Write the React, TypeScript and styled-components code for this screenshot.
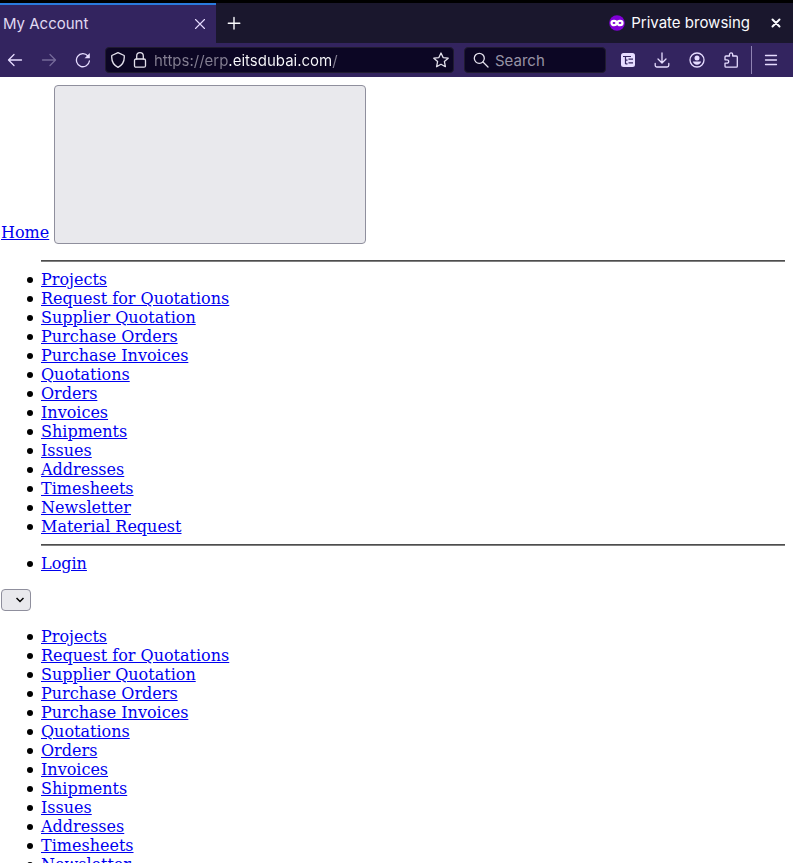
import React from 'react';
import styled, { createGlobalStyle } from 'styled-components';

const GlobalStyle = createGlobalStyle`
  * { box-sizing: border-box; }
  body { margin: 0; background: #fff; }
  button, input { font-family: Inter, sans-serif; }
`;

const Window = styled.div`
  display: flex;
  flex-direction: column;
  height: 100vh;
  overflow: hidden;
  border-top: 3px solid #000;
`;

const TabBar = styled.header`
  display: flex;
  align-items: stretch;
  flex: none;
  height: 40px;
  background: #1a172d;
  color: #fbfbfe;
  font: 15px/20px Inter, sans-serif;
`;

const Tab = styled.div`
  display: flex;
  align-items: center;
  justify-content: space-between;
  width: 216px;
  padding: 0 8px 0 3px;
  background: #33245f;
  border-top: 2px solid #2a7bde;
  color: #e0d9f2;
`;

const IconButton = styled.button<{ $width?: number; $color?: string }>`
  display: flex;
  flex: none;
  align-items: center;
  justify-content: center;
  width: ${(p) => p.$width ?? 16}px;
  padding: 0;
  border: 0;
  background: none;
  color: ${(p) => p.$color ?? '#e6dcff'};
`;

const PrivateBadge = styled.div`
  display: flex;
  align-items: center;
  gap: 6px;
  margin: 0 9px 0 auto;
  padding-bottom: 1px;
`;

const Toolbar = styled.nav`
  display: flex;
  flex: none;
  align-items: center;
  height: 34px;
  padding-right: 3px;
  background: #33245f;
`;

const Field = styled.div`
  display: flex;
  align-items: center;
  height: 26px;
  border: 1px solid #201c30;
  border-radius: 4px;
  background: #0c0624;
  color: #e4e1ed;
`;

const AddressField = styled(Field)`
  flex: 1;
  gap: 6px;
  margin-left: 6px;
  padding: 0 4px;
`;

const SearchField = styled(Field)`
  flex: none;
  gap: 6px;
  width: 142px;
  margin: 0 10px;
  padding: 0 8px;
`;

const TextInput = styled.input`
  flex: 1;
  min-width: 0;
  height: 24px;
  padding: 0;
  border: 0;
  outline: 0;
  background: transparent;
  color: #fbfbfe;
  font-size: 15px;
  &::placeholder { color: #9793a5; opacity: 1; }
`;

const AddressInput = styled(TextInput)`
  background: linear-gradient(90deg, #858093 75px, #fbfbfe 75px, #fbfbfe 178px, #858093 178px);
  background-clip: text;
  -webkit-background-clip: text;
  -webkit-text-fill-color: transparent;
`;

const Divider = styled.span`
  width: 1px;
  height: 28px;
  background: #8f83b2;
`;

const Page = styled.main`
  flex: 1;
  min-height: 0;
  overflow: hidden;
  padding: 8px 8px 0 1px;
  font: 16px/19px "DejaVu Serif", serif;
  color: #000;
`;

const HomeRow = styled.div`
  display: flex;
  align-items: flex-end;
  gap: 5px;
`;

const Link = styled.a`
  color: #0000ee;
  text-decoration: underline;
`;

const HomeLink = styled(Link)`
  padding-bottom: 2px;
`;

const MenuButton = styled.button`
  width: 312px;
  height: 159px;
  border: 1px solid #8f8f9d;
  border-radius: 4px;
  background: #e9e9ed;
`;

const List = styled.ul`
  margin: 16px 0;
  padding-left: 40px;
  list-style: none;
`;

const Item = styled.li`
  height: 19px;
  &::before {
    content: "";
    display: inline-block;
    width: 6px;
    height: 6px;
    margin: 0 8px 0 -14px;
    border-radius: 50%;
    background: #000;
    vertical-align: 2px;
  }
`;

const Rule = styled.hr`
  height: 2px;
  margin: 8px 0;
  border: solid;
  border-width: 1px 0;
  border-color: #4d4d4d #808080 #808080 #4d4d4d;
`;

const SelectWrap = styled.div`
  display: grid;
  align-items: center;
  width: 30px;
  > * { grid-area: 1 / 1; }
  svg { justify-self: end; margin-right: 7px; pointer-events: none; }
`;

const Select = styled.select`
  appearance: none;
  width: 100%;
  height: 22px;
  border: 1px solid #8f8f9d;
  border-radius: 4px;
  background: #e9e9ed;
`;

const Icon = ({ size = 16, stroke = 1.3, children }: { size?: number; stroke?: number; children: React.ReactNode }) => (
  <svg width={size} height={size} viewBox="0 0 16 16" fill="none" stroke="currentColor"
    strokeWidth={stroke} strokeLinecap="round" strokeLinejoin="round" aria-hidden="true">
    {children}
  </svg>
);

const MaskIcon = () => (
  <svg width="16" height="16" viewBox="0 0 16 16" aria-hidden="true">
    <circle cx="8" cy="8" r="7.8" fill="#8000d7" />
    <g fill="none" stroke="#fff" strokeWidth="2.2">
      <ellipse cx="5" cy="8" rx="2.500" ry="2.200" />
      <ellipse cx="11" cy="8" rx="2.500" ry="2.200" />
    </g>
  </svg>
);

const accountLinks = [
  'Projects', 'Request for Quotations', 'Supplier Quotation', 'Purchase Orders',
  'Purchase Invoices', 'Quotations', 'Orders', 'Invoices', 'Shipments', 'Issues',
  'Addresses', 'Timesheets', 'Newsletter', 'Material Request',
];

const AccountItems = () => (
  <>
    {accountLinks.map((label) => (
      <Item key={label}><Link href="#">{label}</Link></Item>
    ))}
  </>
);

export default function App() {
  return (
    <Window>
      <GlobalStyle />
      <TabBar>
        <Tab>
          <span>My Account</span>
          <IconButton aria-label="Close tab"><Icon stroke={1.1}><path d="M3.500 3.500l9 9M12.500 3.500l-9 9" /></Icon></IconButton>
        </Tab>
        <IconButton aria-label="New tab" $width={35} $color="#fbfbfe"><Icon stroke={1.4}><path d="M8 2.500v11.500M2.300 8.200h11.500" /></Icon></IconButton>
        <PrivateBadge><MaskIcon /><span>Private browsing</span></PrivateBadge>
        <IconButton aria-label="Close window" $width={34} $color="#fbfbfe"><Icon stroke={2}><path d="M4.500 4.500l7 7M11.500 4.500l-7 7" /></Icon></IconButton>
      </TabBar>
      <Toolbar>
        <IconButton aria-label="Back" $width={30}><Icon><path d="M14.500 8H1.800M7 2.500L1.500 8 7 13.500" /></Icon></IconButton>
        <IconButton aria-label="Forward" $width={37} $color="#756a99"><Icon><path d="M1.500 8h12.700M9 2.500L14.500 8 9 13.500" /></Icon></IconButton>
        <IconButton aria-label="Reload" $width={32}><Icon><path d="M14.400 9a6.500 6.500 0 1 1-1.500-5" /><path d="M14.800 1v5.200H9.600z" fill="currentColor" stroke="none" /></Icon></IconButton>
        <AddressField>
          <Icon><path d="M8 .7l6.200 2.800c.5 5.200-1.300 9.300-6.200 11.800C3.100 12.800 1.300 8.700 1.800 3.500z" /></Icon>
          <Icon><rect x="2.500" y="7" width="11" height="8.200" rx="1.500" /><path d="M4.700 7V4a3.300 3.300 0 0 1 6.600 0v3" /></Icon>
          <AddressInput aria-label="Address" defaultValue="https://erp.eitsdubai.com/" />
          <Icon><path d="M8 1l2.100 4.600 5.100.6-3.800 3.400 1 5.100L8 12.200l-4.400 2.500 1-5.100L.8 6.200l5.100-.6z" /></Icon>
        </AddressField>
        <SearchField>
          <Icon><circle cx="6.300" cy="6.300" r="5" /><path d="M10 10l5 5" /></Icon>
          <TextInput aria-label="Search" placeholder="Search" />
        </SearchField>
        <IconButton aria-label="Containers" $width={24}>
          <Icon stroke={1.2}>
            <rect x="1" y="1" width="14" height="14" rx="2.500" fill="currentColor" stroke="none" />
            <path d="M3 4.500h8M5.500 4.500v7.500M5.500 8.200h2M5.500 11.800h2M8.500 7.200H13M8.500 10.800H13" stroke="#33245f" strokeLinecap="butt" />
          </Icon>
        </IconButton>
        <IconButton aria-label="Downloads" $width={44}><Icon><path d="M8 1v9.500M4 7l4 4 4-4M1.200 11.500v1.800a1.700 1.700 0 0 0 1.700 1.700h10.200a1.700 1.700 0 0 0 1.700-1.700v-1.800" /></Icon></IconButton>
        <IconButton aria-label="Account" $width={26}>
          <Icon><circle cx="8" cy="8" r="7" /><circle cx="8" cy="6" r="2.500" fill="currentColor" stroke="none" /><path d="M3.800 9.500h8.400c-.5 2-2.200 3.200-4.200 3.200s-3.700-1.200-4.200-3.200z" fill="currentColor" stroke="none" /></Icon>
        </IconButton>
        <IconButton aria-label="Extensions" $width={41}>
          <Icon><path d="M6.500 4V2.500a1.600 1.600 0 0 1 3.200 0V4h3.600c.6 0 1 .4 1 1v9.300c0 .5-.4.900-1 .9H3c-.6 0-1-.4-1-.9v-3.100h2a1.600 1.600 0 0 0 0-3.400H2V5c0-.6.400-1 1-1z" /></Icon>
        </IconButton>
        <Divider />
        <IconButton aria-label="Application menu" $width={38}><Icon><path d="M2.500 3.500h11M2.500 8h11M2.500 12.500h11" /></Icon></IconButton>
      </Toolbar>
      <Page>
        <HomeRow>
          <HomeLink href="#">Home</HomeLink>
          <MenuButton aria-label="Toggle navigation" />
        </HomeRow>
        <List>
          <Rule />
          <AccountItems />
          <Rule />
          <Item><Link href="#">Login</Link></Item>
        </List>
        <SelectWrap>
          <Select aria-label="Account section"><option value="" /></Select>
          <svg width="8" height="6" viewBox="0 0 8 6" fill="none" stroke="#000" strokeWidth="1.500" aria-hidden="true"><path d="M.5 1L4 4.500 7.500 1" /></svg>
        </SelectWrap>
        <List><AccountItems /></List>
      </Page>
    </Window>
  );
}
